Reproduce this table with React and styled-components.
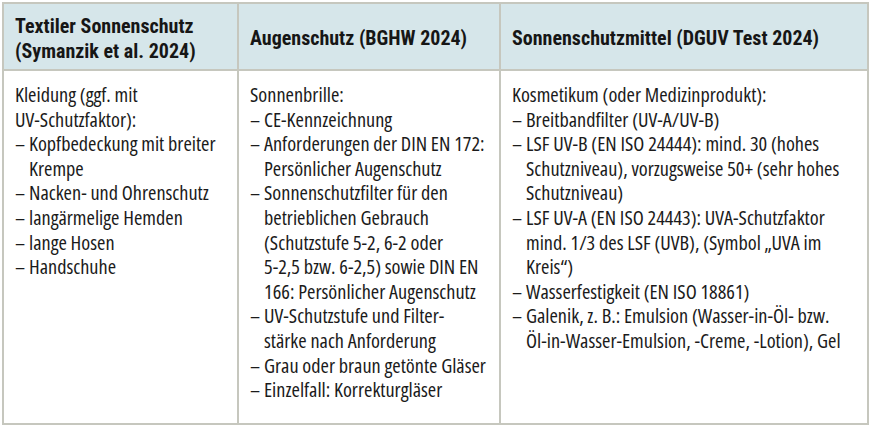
import React from "react";
import styled, { createGlobalStyle } from "styled-components";

const GlobalStyle = createGlobalStyle`
  html, body { margin: 0; padding: 0; background: #ffffff; }
  body { color: #1b1b1b; font-family: 'Open Sans', sans-serif; }
`;

const Page = styled.div`
  padding: 2px 0 0 2px;
`;

const Table = styled.div`
  width: 867px;
  display: grid;
  grid-template-columns: 233px 260px 366px;
  grid-template-rows: 65px 352px;
  gap: 2px;
  padding: 2px;
  box-sizing: border-box;
  background: #c6c7be;
`;

const HeadCell = styled.div`
  background: #d6e6ea;
  display: flex;
  align-items: center;
  padding: 4px 11px 0 11px;
  font-family: 'Roboto Condensed', 'Roboto', sans-serif;
  font-stretch: condensed;
  font-weight: 700;
  font-size: 20px;
  line-height: 24.4px;
  white-space: nowrap;
  color: #161616;
`;

const BodyCell = styled.div`
  background: #ffffff;
  padding: 11px 0 0 11px;
  font-family: 'Open Sans', sans-serif;
  font-stretch: condensed;
  font-weight: 400;
  font-size: 20.3px;
  line-height: 24.6px;
  white-space: nowrap;
`;

const Intro = styled.div``;

const Item = styled.div`
  padding-left: 14px;
  text-indent: -14px;
`;

const Dash = styled.span`
  display: inline-block;
  width: 14px;
  text-indent: 0;
`;

const columns = [
  {
    head: ["Textiler Sonnenschutz", "(Symanzik et al. 2024)"],
    intro: ["Kleidung (ggf. mit", "UV-Schutzfaktor):"],
    items: [
      ["Kopfbedeckung mit breiter", "Krempe"],
      ["Nacken- und Ohrenschutz"],
      ["langärmelige Hemden"],
      ["lange Hosen"],
      ["Handschuhe"],
    ],
  },
  {
    head: ["Augenschutz (BGHW 2024)"],
    intro: ["Sonnenbrille:"],
    items: [
      ["CE-Kennzeichnung"],
      ["Anforderungen der DIN EN 172:", "Persönlicher Augenschutz"],
      [
        "Sonnenschutzfilter für den",
        "betrieblichen Gebrauch",
        "(Schutzstufe 5-2, 6-2 oder",
        "5-2,5 bzw. 6-2,5) sowie DIN EN",
        "166: Persönlicher Augenschutz",
      ],
      ["UV-Schutzstufe und Filter-", "stärke nach Anforderung"],
      ["Grau oder braun getönte Gläser"],
      ["Einzelfall: Korrekturgläser"],
    ],
  },
  {
    head: ["Sonnenschutzmittel (DGUV Test 2024)"],
    intro: ["Kosmetikum (oder Medizinprodukt):"],
    items: [
      ["Breitbandfilter (UV-A/UV-B)"],
      [
        "LSF UV-B (EN ISO 24444): mind. 30 (hohes",
        "Schutzniveau), vorzugsweise 50+ (sehr hohes",
        "Schutzniveau)",
      ],
      [
        "LSF UV-A (EN ISO 24443): UVA-Schutzfaktor",
        "mind. 1/3 des LSF (UVB), (Symbol „UVA im",
        "Kreis“)",
      ],
      ["Wasserfestigkeit (EN ISO 18861)"],
      [
        "Galenik, z. B.: Emulsion (Wasser-in-Öl- bzw.",
        "Öl-in-Wasser-Emulsion, -Creme, -Lotion), Gel",
      ],
    ],
  },
];

const Lines = ({ lines }) =>
  lines.map((l, i) => (
    <React.Fragment key={i}>
      {l}
      {i < lines.length - 1 && <br />}
    </React.Fragment>
  ));

export default function App() {
  return (
    <>
      <GlobalStyle />
      <Page>
        <Table>
          {columns.map((c, i) => (
            <HeadCell key={"h" + i}>
              <div>
                <Lines lines={c.head} />
              </div>
            </HeadCell>
          ))}
          {columns.map((c, i) => (
            <BodyCell key={"b" + i}>
              <Intro>
                <Lines lines={c.intro} />
              </Intro>
              {c.items.map((it, j) => (
                <Item key={j}>
                  <Dash>–</Dash>
                  <Lines lines={it} />
                </Item>
              ))}
            </BodyCell>
          ))}
        </Table>
      </Page>
    </>
  );
}
